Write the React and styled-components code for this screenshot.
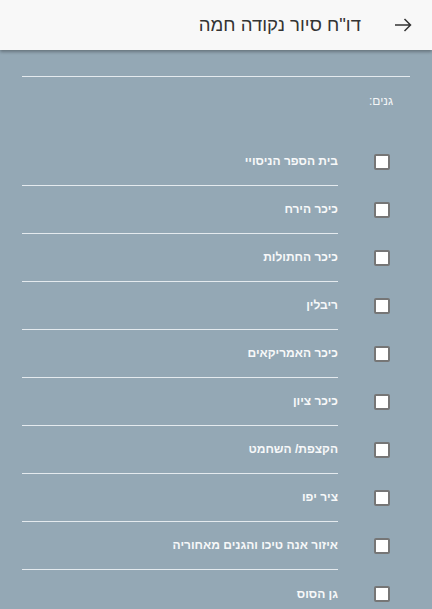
import React from 'react';
import styled, { createGlobalStyle } from 'styled-components';

const GlobalStyle = createGlobalStyle`
    html, body {
        margin: 0;
        padding: 0;
        background: #94a8b5;
        font-family: "Liberation Sans", Arial, sans-serif;
    }
`;

const Page = styled.div`
    direction: rtl;
    width: 432px;
    min-height: 609px;
    background: #94a8b5;
    overflow: hidden;
`;

const Header = styled.header`
    height: 50px;
    display: flex;
    align-items: center;
    gap: 33px;
    padding: 0 20px 0 0;
    background: #f8f8f8;
    box-shadow: 0 2px 3px rgba(0, 0, 0, 0.3);
    position: relative;
    z-index: 1;
`;

const BackButton = styled.button`
    display: flex;
    align-items: center;
    justify-content: center;
    width: 18px;
    height: 20px;
    padding: 0;
    border: none;
    background: none;
    color: #333;
    cursor: pointer;
`;

const Title = styled.h1`
    margin: 0;
    font-size: 18.6px;
    font-weight: 400;
    color: #333;
`;

const Content = styled.main`
    padding: 26px 22px 0;
`;

const Rule = styled.hr`
    margin: 0;
    border: none;
    border-top: 1px solid #e4eaee;
`;

const GroupLabel = styled.div`
    margin-top: 16px;
    padding-right: 17px;
    font-size: 12px;
    line-height: 16px;
    color: #f4f6f7;
`;

const List = styled.ul`
    list-style: none;
    margin: 29px 0 0;
    padding: 0;
`;

const Row = styled.li`
    display: flex;
    align-items: stretch;
    height: 48px;
    cursor: pointer;
`;

const BoxCell = styled.div`
    display: flex;
    align-items: center;
    width: 72px;
    padding-right: 20px;
    box-sizing: border-box;
`;

const Box = styled.span`
    width: 16px;
    height: 16px;
    box-sizing: border-box;
    border: 2px solid #767676;
    border-radius: 2px;
    background: #fff;
`;

const Label = styled.div`
    flex: 1;
    display: flex;
    align-items: center;
    border-bottom: ${p => (p.$last ? 'none' : '1px solid #e4eaee')};
    font-size: 12px;
    font-weight: 700;
    color: #f7f8f9;
    padding-bottom: 1px;
`;

const gardens = [
    'בית הספר הניסויי',
    'כיכר הירח',
    'כיכר החתולות',
    'ריבלין',
    'כיכר האמריקאים',
    'כיכר ציון',
    'הקצפת/ השחמט',
    'ציר יפו',
    'איזור אנה טיכו והגנים מאחוריה',
    'גן הסוס',
];

const ArrowIcon = () => (
    <svg width="18" height="14" viewBox="0 0 18 14" fill="none" stroke="currentColor" strokeWidth="1.5">
        <path d="M1 7h15.5M10.5 1l6 6-6 6" />
    </svg>
);

const App = () => {
    const rows = gardens.map((name, i) => (
        <Row key={name}>
            <BoxCell>
                <Box />
            </BoxCell>
            <Label $last={i === gardens.length - 1}>{name}</Label>
        </Row>
    ));

    return (
        <Page>
            <GlobalStyle />
            <Header>
                <BackButton aria-label="חזרה">
                    <ArrowIcon />
                </BackButton>
                <Title>דו"ח סיור נקודה חמה</Title>
            </Header>
            <Content>
                <Rule />
                <GroupLabel>גנים:</GroupLabel>
                <List>{rows}</List>
            </Content>
        </Page>
    );
};

export default App;
